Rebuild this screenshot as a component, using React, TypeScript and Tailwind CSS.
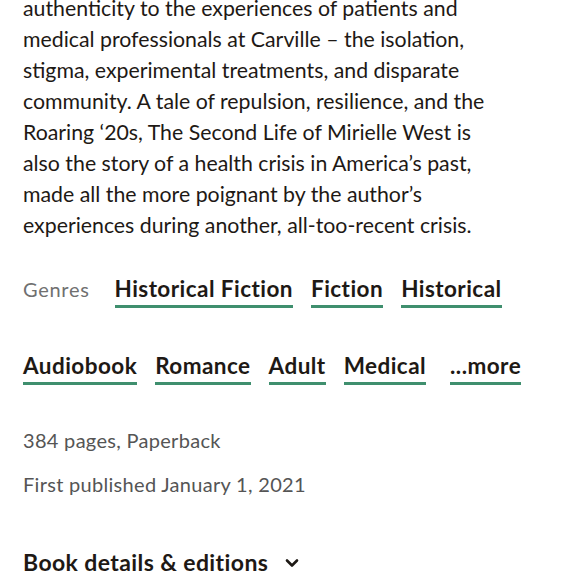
import React from "react";

const row = ["Historical Fiction", "Fiction", "Historical", "Audiobook", "Romance", "Adult", "Medical"];

function Tag({ label, extra = "" }: { label: string; extra?: string }) {
  return (
    <a
      className={`inline-block text-[22.5px] font-bold leading-[28px] tracking-[0.45px] pb-[2px] border-b-[3px] border-[#3f8f6e] text-[#1e1915] whitespace-nowrap ${extra}`}
    >
      {label}
    </a>
  );
}

export default function App() {
  return (
    <div className="w-[580px] h-[580px] overflow-hidden bg-white text-[#1e1915]" style={{ fontFamily: "Lato, sans-serif" }}>
      <div className="px-[23px]">
        <p className="-mt-[7px] text-[21.3px] leading-[31px] whitespace-nowrap">
          authenticity to the experiences of patients and<br />
          medical professionals at Carville – the isolation,<br />
          stigma, experimental treatments, and disparate<br />
          community. A tale of repulsion, resilience, and the<br />
          Roaring ‘20s, The Second Life of Mirielle West is<br />
          also the story of a health crisis in America’s past,<br />
          made all the more poignant by the author’s<br />
          experiences during another, all-too-recent crisis.
        </p>

        <div className="mt-[33px] flex flex-wrap items-baseline gap-x-[18px] gap-y-[44px]">
          <span className="text-[20px] tracking-[0.7px] text-[#707070] mr-[7px]">Genres</span>
          {row.map((g) => (
            <Tag key={g} label={g} />
          ))}
          <Tag label="...more" extra="ml-[6px]" />
        </div>

        <div className="mt-[43px] text-[20px] tracking-[0.3px] leading-[24px] text-[#555555]">
          <div>384 pages, Paperback</div>
          <div className="mt-[20px]">First published January 1, 2021</div>
        </div>

        <div className="mt-[52px] flex items-center gap-[17px]">
          <span className="text-[23px] font-bold tracking-[0.4px] leading-[28px]">Book details &amp; editions</span>
          <svg width="14" height="10" viewBox="0 0 14 10" className="mt-[2px]">
            <path d="M2 2.5 L7 7.5 L12 2.5" fill="none" stroke="#1e1915" strokeWidth="2.6" strokeLinecap="round" strokeLinejoin="round" />
          </svg>
        </div>
      </div>
    </div>
  );
}
